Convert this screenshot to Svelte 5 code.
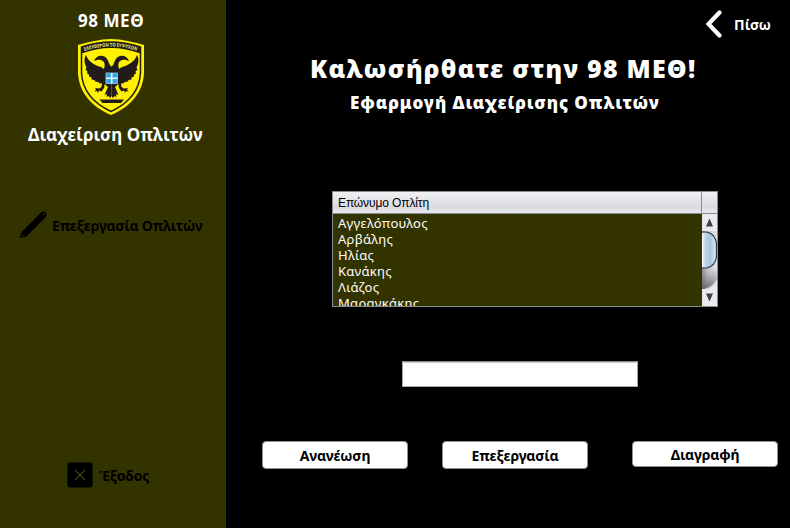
<script>
  const soldiers = ['Αγγελόπουλος', 'Αρβάλης', 'Ηλίας', 'Κανάκης', 'Λιάζος', 'Μαραγκάκης'];
  let query = $state('');
</script>

<div class="app">
  <aside>
    <div class="unit"><span>98 ΜΕΘ</span></div>
    <svg class="crest" width="68" height="78" viewBox="0 0 68 78">
      <path d="M34 1C45 1 56 4 67 7V35C66 55 53 69 34 77C15 69 2 55 1 35V7C12 4 23 1 34 1Z" fill="#fff100" />
      <path d="M34 4C44 4 54 6 63.500 9V35C62.500 53 51 65.500 34 73.500C17 65.500 5.500 53 4.500 35V9C14 6 24 4 34 4Z" fill="#fff100" stroke="#211c12" stroke-width="1.500" />
      <path d="M4.500 9C24 2.500 44 2.500 63.500 9V15.500C44 8 24 8 4.500 15.500Z" fill="#211c12" />
      <path id="motto" d="M7.500 13Q34 4.200 60.500 13" fill="none" />
      <text class="motto"><textPath href="#motto" textLength="53" lengthAdjust="spacingAndGlyphs">ΕΛΕΥΘΕΡΟΝ ΤΟ ΕΥΨΥΧΟΝ</textPath></text>
      <g fill="#211c1a">
        <path id="wing" d="M9 17C11 23 17 27 24 29C28 31 29 34 34.500 35V58L33 60L31.500 58L29.500 59L30 56L27.500 57L31 49C29 47.500 28 46 27 45L23 45.500L21 44L18 43.500L17.500 42L14.500 41.500L14.500 39.500L12 38.500L12 36.500L10 35.500L10.500 33.500L8.500 31.500L9.500 29.500C7 25 7 20 9 17Z" />
        <use href="#wing" transform="translate(69 0) scale(-1 1)" />
        <path id="neck" d="M17 23C18.500 19 22 17 26 18C32 19.500 31 27 35 29V36H29C24 32 30 28 26.500 23.500C25 22 22 21.500 20 22Z" />
        <use href="#neck" transform="translate(69 0) scale(-1 1)" />
        <path id="claw" d="M28 45L27 50L24.500 53.500L22 52.500L21 55L20 53L17.500 53.500L19 51.500L18 50L22 50.500L24.500 49L25 45Z" />
        <use href="#claw" transform="translate(69 0) scale(-1 1)" />
        <path d="M22.500 61.500H47L44 65H25.500Z" />
      </g>
      <rect x="29" y="35" width="11.400" height="10.400" fill="#38a4dc" stroke="#8ad4f0" stroke-width=".8" />
      <path d="M34.700 35V45.400M29 40.200H40.400" stroke="#e6faff" stroke-width="1.600" />
    </svg>
    <div class="manage"><span>Διαχείριση Οπλιτών</span></div>
    <div class="nav edit">
      <svg width="30" height="30" viewBox="0 0 30 30">
        <path d="M1.500 28L3.500 22L22.500 3C24 1.200 26 1 27.500 2.500C29 4 29 5.500 27.500 7.500L8.500 26.500Z" fill="#000" />
        <circle cx="25.800" cy="4.300" r="1" fill="#292900" /><circle cx="4.500" cy="25.500" r=".9" fill="#333300" />
      </svg>
      <span>Επεξεργασία Οπλιτών</span>
    </div>
    <div class="nav exit">
      <svg width="26" height="26" viewBox="0 0 26 26">
        <rect x=".5" y=".5" width="25" height="25" rx="2.500" fill="#000" />
        <path d="M8 8L18 18M18 8L8 18" stroke="#44441a" stroke-width="1.100" />
      </svg>
      <span>Έξοδος</span>
    </div>
  </aside>

  <main>
    <div class="back">
      <svg width="18" height="28" viewBox="0 0 18 28"><path d="M14.500 2.500L3.500 14L14.500 25.500" fill="none" stroke="#fff" stroke-width="4.200" stroke-linecap="round" stroke-linejoin="miter" /></svg>
      <span>Πίσω</span>
    </div>
    <h1><span>Καλωσήρθατε στην 98 ΜΕΘ!</span></h1>
    <h2><span>Εφαρμογή Διαχείρισης Οπλιτών</span></h2>

    <div class="table">
      <div class="head"><div class="col"><span>Επώνυμο Οπλίτη</span></div></div>
      <div class="body">
        <div class="rows">
          {#each soldiers as name}<div class="row"><span>{name}</span></div>{/each}
        </div>
        <div class="scroll">
          <svg width="16" height="92" viewBox="0 0 16 92">
            <defs>
              <linearGradient id="track"><stop offset="0" stop-color="#8f9197" /><stop offset=".35" stop-color="#c4c5ca" /><stop offset="1" stop-color="#e6e6ea" /></linearGradient>
              <linearGradient id="thumb"><stop offset="0" stop-color="#f2f9ff" /><stop offset=".2" stop-color="#c3d8e9" /><stop offset=".55" stop-color="#a9c5dc" /><stop offset="1" stop-color="#dcecf8" /></linearGradient>
              <linearGradient id="shade" x2="0" y2="1"><stop offset="0" stop-color="#77797e" stop-opacity="0" /><stop offset="1" stop-color="#55575c" stop-opacity=".8" /></linearGradient>
            </defs>
            <rect width="16" height="92" fill="#eaebef" />
            <rect y="17" width="16" height="58" fill="url(#track)" />
            <path d="M0 54H16V62Q13 72 2 75H0Z" fill="url(#shade)" />
            <path d="M16 66V75H4Q13 74 16 66Z" fill="#eaebef" />
            <path d="M0 18H3C10 18 14.500 24 14.500 31V41C14.500 48 10 54 3 54H0Z" fill="url(#thumb)" stroke="#29394b" stroke-width="1.200" />
            <path d="M.5 19V53" stroke="#f8fcff" />
            <path d="M4 12.500L7.500 4.500L11 12.500ZM4 79.500L7.500 87.500L11 79.500Z" fill="#3c3f43" />
          </svg>
        </div>
      </div>
    </div>

    <input bind:value={query} aria-label="Επώνυμο Οπλίτη" />
    <div class="buttons">
      <button><span>Ανανέωση</span></button>
      <button><span>Επεξεργασία</span></button>
      <button class="delete"><span>Διαγραφή</span></button>
    </div>
  </main>
</div>

<style>
  :global(body) { margin: 0; background: #000; }
  .app { width: 790px; height: 528px; display: flex; overflow: hidden; background: #000; color: #fff; font-family: "Noto Sans", "Open Sans", sans-serif; font-weight: 700; }
  * { box-sizing: border-box; }
  span { white-space: nowrap; }
  aside { width: 226px; height: 528px; flex: none; background: #333300; display: flex; flex-direction: column; }
  .unit { height: 38px; padding-left: 78px; padding-top: 9px; font-size: 17px; line-height: 24px; letter-spacing: .55px; }
  .crest { display: block; margin-left: 77px; flex: none; }
  .motto { font: 700 5px "Noto Sans", sans-serif; fill: #eee58c; }
  .manage { height: 90px; padding: 7px 0 0 28px; font-size: 17px; line-height: 24px; letter-spacing: .08px; }
  .nav { display: flex; align-items: center; color: #000; font-size: 14px; line-height: 20px; letter-spacing: -.2px; }
  .nav svg { flex: none; }
  .nav span { padding-top: 2px; }
  .edit { height: 38px; padding-left: 18px; gap: 4px; }
  .exit { margin-top: 218px; padding-left: 67px; gap: 6px; }
  main { width: 564px; display: flex; flex-direction: column; }
  .back { height: 50px; padding: 0 19px 2px 0; display: flex; align-items: center; justify-content: flex-end; gap: 11px; font-size: 14px; }
  .back span { padding-top: 1px; }
  h1, h2 { margin: 0; font-weight: 900; }
  h1 { height: 38px; padding-left: 84px; font-size: 25px; line-height: 36px; letter-spacing: 1.22px; }
  h2 { height: 103px; padding-left: 124px; font-size: 17px; line-height: 30px; letter-spacing: .92px; }
  .table { width: 386px; height: 116px; margin-left: 106px; border: 1px solid #8b8d92; flex: none; overflow: hidden; }
  .head { height: 22px; border-bottom: 1px solid #8b8d92; background: linear-gradient(#f1f1f4, #dadbe1 70%, #e9e9ed); color: #000; }
  .col { width: 369px; height: 21px; border-right: 1px solid #8b8d92; padding-left: 5px; font: 12px/22px "Liberation Sans", sans-serif; letter-spacing: -.12px; }
  .body { display: flex; height: 92px; }
  .rows { width: 369px; background: #333300; padding-top: 1px; overflow: hidden; font-weight: 400; font-size: 13px; letter-spacing: .27px; }
  .row { height: 16px; line-height: 16px; padding-left: 5px; }
  .scroll { width: 15px; overflow: hidden; }
  .scroll svg { display: block; }
  input { width: 236px; height: 26px; margin: 54px 0 0 176px; flex: none; padding: 2px 6px; border: 1px solid #a6a8ad; border-top-color: #8b8d91; background: #fff; outline: none; font: 13px "Noto Sans", sans-serif; box-shadow: inset 0 1px #c9cacd; }
  .buttons { display: flex; margin: 54px 0 0 36px; align-items: flex-start; }
  button { width: 146px; height: 28px; margin-right: 34px; flex: none; padding: 2px 0 0; border: 1px solid #8e9094; border-radius: 4px; background: #fff; color: #000; font: 700 14px/24px "Noto Sans", sans-serif; letter-spacing: -.15px; }
  .delete { margin: 0 0 0 10px; height: 26px; line-height: 22px; }
</style>
